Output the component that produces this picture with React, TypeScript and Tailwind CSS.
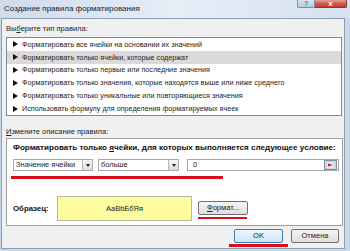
import React from "react";

const font = { fontFamily: '"Liberation Sans", Arial, sans-serif' };

function Arrow() {
  return (
    <span className="inline-block w-0 h-0 border-y-[3px] border-y-transparent border-l-[5px] border-l-[#111] mr-[4px] ml-[6px]" />
  );
}

function Combo({ text, w }: { text: string; w: string }) {
  return (
    <div className={`${w} h-[12px] bg-white border border-[#a9a9a9] flex items-center`}>
      <span className="flex-1 pl-[2px] text-[7.5px] leading-none text-[#222] whitespace-nowrap overflow-hidden">{text}</span>
      <div className="w-[10px] h-[10px] border-l border-[#b5b5b5] bg-gradient-to-b from-[#f6f6f6] to-[#dcdcdc] flex items-center justify-center">
        <span className="w-0 h-0 border-x-[2.5px] border-x-transparent border-t-[3px] border-t-[#222]" />
      </div>
    </div>
  );
}

const items = [
  "Форматировать все ячейки на основании их значений",
  "Форматировать только ячейки, которые содержат",
  "Форматировать только первые или последние значения",
  "Форматировать только значения, которые находятся выше или ниже среднего",
  "Форматировать только уникальные или повторяющиеся значения",
  "Использовать формулу для определения форматируемых ячеек",
];

export default function App() {
  return (
    <div className="w-[350px] h-[251px] overflow-hidden relative flex flex-col bg-[#c7d8eb]" style={font}>
      {/* title bar */}
      <div className="h-[18px] flex items-center pl-[4px] bg-gradient-to-r from-[#cfdcec] via-[#e6eef7] to-[#d5e2f0]">
        <span className="text-[8px] leading-none text-[#1a1a1a] whitespace-nowrap">Создание правила форматирования</span>
      </div>
      <div className="absolute top-0 right-[3px] flex">
        <div className="w-[18px] h-[8px] border border-t-0 border-[#7f8ea3] rounded-bl-[2px] bg-gradient-to-b from-[#d9e3ee] to-[#b9c8da] flex items-center justify-center">
          <span className="text-[7px] leading-none text-[#3c4a5c]">?</span>
        </div>
        <div className="w-[32px] h-[8px] border border-t-0 border-l-0 border-[#8a3a34] rounded-br-[2px] bg-gradient-to-b from-[#e4a198] via-[#cf5a4e] to-[#c13a2e] flex items-center justify-center">
          <span className="text-[8px] leading-none text-white font-bold">x</span>
        </div>
      </div>

      {/* client area */}
      <div className="ml-[1px] mr-[5px] h-[231px] border border-[#8e9db2] bg-[#f0f0f0] flex flex-col">
        <div className="pl-[4px] pt-[5px] h-[10px] box-content text-[7.5px] leading-[10px] text-[#222] whitespace-nowrap">
          Вы<span className="underline">б</span>ерите тип правила:
        </div>
        <div className="ml-[4px] mt-[3px] w-[336px] h-[79px] border border-[#828790] bg-white flex flex-col">
          {items.map((t, i) => (
            <div
              key={i}
              className={`h-[13px] flex items-center text-[7.2px] leading-none text-[#222] whitespace-nowrap ${i === 1 ? "bg-[#dadada]" : ""}`}
            >
              <Arrow />
              {t}
            </div>
          ))}
        </div>
        <div className="pl-[4px] mt-[11px] h-[10px] text-[7.5px] leading-[10px] text-[#222] whitespace-nowrap">
          <span className="underline">И</span>змените описание правила:
        </div>
        <div className="ml-[4px] mt-[1px] w-[337px] h-[88px] border border-[#a0a0a0] bg-white flex flex-col pl-[6px]">
          <div className="mt-[4px] h-[10px] text-[8.1px] leading-[10px] font-bold text-[#111] whitespace-nowrap">
            Форматировать только <span className="underline">я</span>чейки, для которых выполняется следующее условие:
          </div>
          <div className="mt-[6px] flex items-center">
            <Combo text="Значение ячейки" w="w-[80px]" />
            <div className="w-[5px]" />
            <Combo text="больше" w="w-[81px]" />
            <div className="w-[8px]" />
            <div className="w-[152px] h-[12px] bg-white border border-[#a9a9a9] flex items-center">
              <span className="flex-1 pl-[5px] text-[7.5px] leading-none text-[#222]">0</span>
              <svg width="13" height="10" viewBox="0 0 13 10" className="mr-[1px]">
                <rect x="0.5" y="0.5" width="12" height="9" fill="#dfe6ef" stroke="#7d8ea6" />
                <rect x="2" y="2" width="9" height="6" fill="#ffffff" stroke="#9aa8ba" strokeWidth="0.6" />
                <line x1="2" y1="4" x2="11" y2="4" stroke="#9aa8ba" strokeWidth="0.5" />
                <line x1="2" y1="6" x2="11" y2="6" stroke="#9aa8ba" strokeWidth="0.5" />
                <path d="M4 3.5 L9 5 L4 6.5 Z" fill="#d0202a" />
              </svg>
            </div>
          </div>
          <div className="mt-[5px] -ml-[2px] w-[212px] h-[3px] bg-[#d9101c]" />
          <div className="mt-[17px] flex items-start">
            <div className="w-[44px] h-[25px] flex items-center text-[7.8px] font-bold text-[#111] leading-none">
              Образец:
            </div>
            <div className="w-[135px] h-[25px] bg-[#fdfc9f] border border-[#b9b9a0] flex items-center justify-center text-[7.5px] leading-none text-[#222]">
              AaBbБбЯя
            </div>
            <div className="ml-[6px] mt-[5px] flex flex-col">
              <div className="w-[50px] h-[14px] border border-[#707070] rounded-[2px] bg-gradient-to-b from-[#f4f4f4] to-[#dedede] flex items-center justify-center text-[7.5px] leading-none text-[#222]">
                <span className="underline">Ф</span>ормат...
              </div>
              <div className="mt-[2px] w-[49px] h-[2px] bg-[#d9101c]" />
            </div>
          </div>
        </div>
        <div className="mt-[3px] flex justify-end pr-[5px]">
          <div className="flex flex-col items-center">
            <div className="w-[49px] h-[14px] border border-[#3c7fb1] rounded-[2px] bg-gradient-to-b from-[#eef6fc] to-[#cfe4f4] flex items-center justify-center text-[7.5px] leading-none text-[#222]">
              OK
            </div>
            <div className="mt-[1px] w-[59px] -mx-[5px] h-[3px] bg-[#d9101c]" />
          </div>
          <div className="ml-[8px] w-[48px] h-[14px] border border-[#707070] rounded-[2px] bg-gradient-to-b from-[#f4f4f4] to-[#dedede] flex items-center justify-center text-[7.5px] leading-none text-[#222]">
            Отмена
          </div>
        </div>
      </div>
    </div>
  );
}
